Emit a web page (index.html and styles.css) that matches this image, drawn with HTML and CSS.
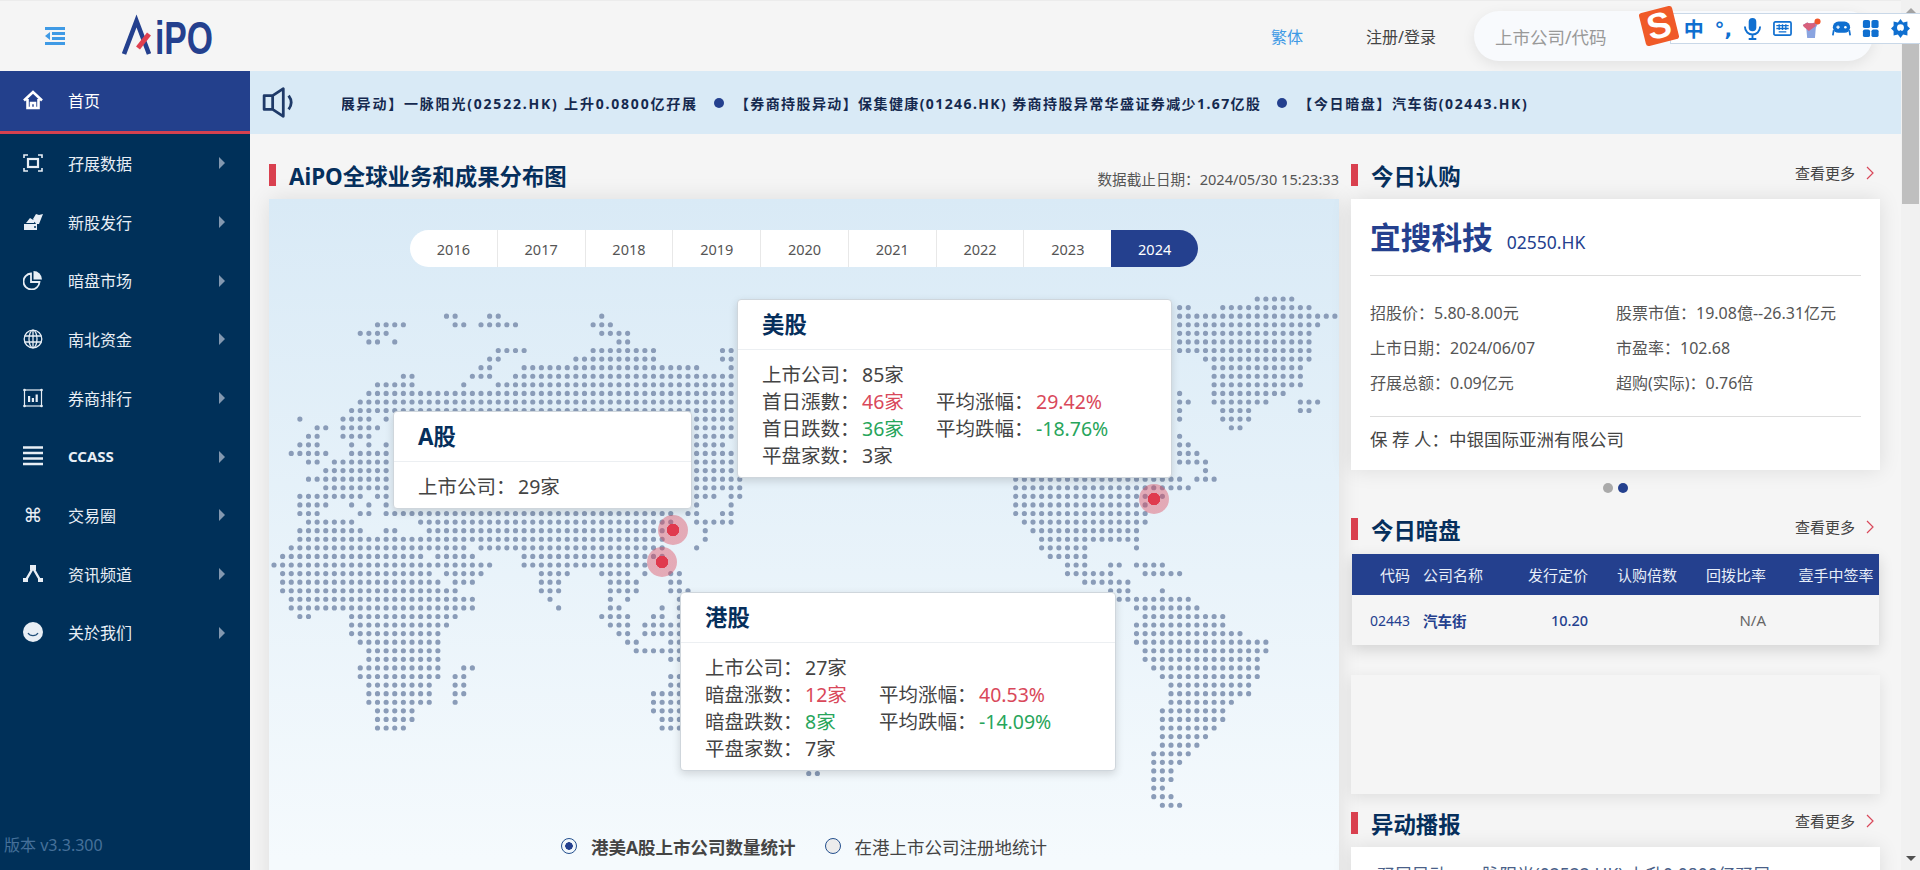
FILE: index.html
```html
<!DOCTYPE html>
<html lang="zh-CN">
<head>
<meta charset="utf-8">
<title>AiPO</title>
<link rel="stylesheet" href="styles.css">
</head>
<body>
<div class="app">
  <header class="topbar">
    <svg class="toggle" viewBox="0 0 20 18"><path d="M0 1.500h20M7 6.500h13M7 11.500h13M0 16.500h20" stroke="#3f9ae5" stroke-width="3" fill="none"/><path d="M5 5v8L0 9z" fill="#3f9ae5"/></svg>
    <svg class="logo" viewBox="0 0 91 35"><path d="M2 35 14.500 2 27 35" fill="none" stroke="#24408e" stroke-width="4.600"/><path d="M16 29 27 15" stroke="#e0404f" stroke-width="5"/><text x="33" y="35" textLength="58" lengthAdjust="spacingAndGlyphs" class="logo-text">iPO</text></svg>
    <a class="lang">繁体</a>
    <a class="login">注册/登录</a>
    <div class="search">上市公司/代码</div>
  </header>
  <div class="layout">
    <nav class="sidebar">
      <a class="nav-item active">
        <svg class="nav-icon" viewBox="0 0 20 20"><path d="M1 10.500 10 2l9 8.500M4.500 9v9h11V9M8 18v-5h4v5" fill="none" stroke="#fff" stroke-width="2.600"/></svg>
        <span>首页</span>
      </a>
      <a class="nav-item">
        <svg class="nav-icon" viewBox="0 0 20 20"><path d="M1 5V2h4M15 2h4v3M19 15v3h-4M5 18H1v-3" fill="none" stroke="#e8eef5" stroke-width="1.600"/><rect x="5" y="6" width="10" height="8" fill="none" stroke="#e8eef5" stroke-width="2.200"/></svg>
        <span>孖展数据</span><i class="caret"></i>
      </a>
      <a class="nav-item">
        <svg class="nav-icon" viewBox="0 0 20 20"><path d="M1 12h13v6H1zM3 11l4-5 5 3-1 2zM10 7l3-5 3 1 4-1-4 10h-3z" fill="#e8eef5"/><circle cx="12" cy="15" r="1" fill="#003059"/></svg>
        <span>新股发行</span><i class="caret"></i>
      </a>
      <a class="nav-item">
        <svg class="nav-icon" viewBox="0 0 20 20"><path d="M8 3.500a8 8 0 1 0 8.500 8.500H8z" fill="none" stroke="#e8eef5" stroke-width="1.800"/><path d="M10.500 1a8.500 8.500 0 0 1 8.500 8.500h-8.500z" fill="#e8eef5"/></svg>
        <span>暗盘市场</span><i class="caret"></i>
      </a>
      <a class="nav-item">
        <svg class="nav-icon" viewBox="0 0 20 20"><g fill="none" stroke="#e8eef5" stroke-width="1.300"><circle cx="10" cy="10" r="8.800"/><ellipse cx="10" cy="10" rx="4" ry="8.800"/><path d="M10 1v18M1.500 7h17M1.500 13h17"/></g></svg>
        <span>南北资金</span><i class="caret"></i>
      </a>
      <a class="nav-item">
        <svg class="nav-icon" viewBox="0 0 20 20"><rect x="1.500" y="2" width="17" height="16" fill="none" stroke="#e8eef5" stroke-width="1.200"/><g fill="#e8eef5"><circle cx="1.500" cy="2" r="1.300"/><circle cx="18.500" cy="2" r="1.300"/><circle cx="1.500" cy="18" r="1.300"/><circle cx="18.500" cy="18" r="1.300"/><path d="M5 8h2.200v6H5zM8.800 10H11v4H8.800zM12.600 6.500h2.200V14h-2.200z"/></g></svg>
        <span>券商排行</span><i class="caret"></i>
      </a>
      <a class="nav-item">
        <svg class="nav-icon" viewBox="0 0 20 20"><path d="M0 1.500h20M0 7h20M0 12.500h20M0 18h20" stroke="#e8eef5" stroke-width="2.600"/></svg>
        <span class="latin">CCASS</span><i class="caret"></i>
      </a>
      <a class="nav-item">
        <span class="cmd">⌘</span>
        <span>交易圈</span><i class="caret"></i>
      </a>
      <a class="nav-item">
        <svg class="nav-icon" viewBox="0 0 20 20"><path d="M3 16 10 4l7 12" fill="none" stroke="#e8eef5" stroke-width="2.400"/><path d="M7 1h6v5H7zM0 14h5v4H0zM15 14h5v4h-5z" fill="#e8eef5"/></svg>
        <span>资讯频道</span><i class="caret"></i>
      </a>
      <a class="nav-item">
        <svg class="nav-icon" viewBox="0 0 20 20"><circle cx="10" cy="10" r="10" fill="#e8eef5"/><path d="M5 11c2 3.500 8 3.500 10 0" fill="none" stroke="#23507a" stroke-width="1.300"/></svg>
        <span>关於我们</span><i class="caret"></i>
      </a>
      <div class="version">版本 v3.3.300</div>
    </nav>
    <main class="content">
      <div class="ticker">
        <svg class="speaker" viewBox="0 0 31 29"><path d="M2 8h8l10-6.500v26L10 21H2zM10 8v13" fill="none" stroke="#1f3a68" stroke-width="2.600" stroke-linejoin="round"/><path d="M25 8c3 4 3 9 0 13" fill="none" stroke="#1f3a68" stroke-width="2.600"/></svg>
        <div class="ticker-window">
          <div class="ticker-track">
            <span class="tick-first">孖展异动】一脉阳光(02522.HK) 上升0.0800亿孖展</span>
            <i class="ticker-dot"></i>
            <span>【券商持股异动】保集健康(01246.HK) 券商持股异常华盛证券减少1.67亿股</span>
            <i class="ticker-dot"></i>
            <span class="tick-last">【今日暗盘】汽车街(02443.HK)</span>
          </div>
        </div>
      </div>
      <div class="columns">
        <section class="col-left">
          <div class="sec-head">
            <h2 class="sec-title">AiPO全球业务和成果分布图</h2>
            <span class="asof">数据截止日期：2024/05/30 15:23:33</span>
          </div>
          <div class="map-card">
            <div class="years">
              <span>2016</span><span>2017</span><span>2018</span><span>2019</span><span>2020</span><span>2021</span><span>2022</span><span>2023</span><span class="on">2024</span>
            </div>
            <div class="stage">
              <svg class="dots" viewBox="0 -2 124 60" preserveAspectRatio="none"><path d="M114-2H118.010
M105-1H106.010M110-1H120.010
M20 0H21.010M25 0H26.010M38 0h.01M105 0H123.010
M12 1H15.010M21 1H22.010M24 1H28.010M37 1H39.010M105 1H121.010
M10 2H13.010M38 2H41.010M105 2H120.010
M11 3H12.010M14 3h.01M40 3H41.010M105 3H120.010
M26 4H29.010M37 4H44.010M52 4H53.010M105 4H120.010
M25 5H26.010M35 5H44.010M52 5H53.010M108 5H120.010
M24 6H25.010M29 6H49.010M53 6h.01M109 6H119.010
M15 7H16.010M23 7H25.010M28 7H53.010M109 7H119.010
M12 8H16.010M22 8h.01M26 8H53.010M109 8H119.010
M11 9H53.010M105 9h.01M109 9H117.010
M10 10H53.010M105 10H106.010M109 10H115.010M119 10H121.010
M9 11H53.010M105 11h.01M110 11H113.010M119 11H120.010
M3 12h.01M8 12H11.010M13 12h.01M49 12H53.010M105 12h.01M110 12H113.010
M5 13H6.010M8 13H12.010M49 13H53.010M111 13H112.010
M4 14H5.010M8 14H11.010M49 14H53.010M105 14h.01
M3 15H5.010M9 15h.01M11 15h.01M13 15h.01M49 15H52.010M105 15H106.010
M2 16H6.010M9 16H13.010M49 16H53.010M105 16H107.010
M4 17H5.010M7 17H13.010M49 17H53.010M105 17H108.010
M6 18H13.010M49 18H53.010M108 18h.01
M4 19H13.010M49 19H54.010M86 19H105.010M107 19H109.010
M6 20H13.010M49 20H54.010M86 20H106.010
M3 21H10.010M12 21H13.010M49 21H51.010M53 21H54.010M86 21H103.010
M3 22H6.010M9 22h.01M11 22h.01M13 22h.01M49 22h.01M53 22h.01M86 22H101.010
M3 23H5.010M10 23H11.010M13 23H46.010M48 23H49.010M52 23H53.010M86 23H101.010
M4 24H9.010M17 24H46.010M49 24H53.010M87 24H101.010
M3 25H10.010M13 25H14.010M18 25H45.010M50 25h.01M88 25H100.010
M3 26H45.010M50 26h.01M89 26H100.010
M2 27H22.010M24 27H45.010M49 27h.01M89 27H94.010M100 27h.01
M1 28H17.010M19 28H23.010M29 28H45.010M90 28H94.010
M0 29H25.010M29 29H43.010M45 29h.01M92 29H94.010M97 29H98.010M100 29H103.010
M1 30H18.010M20 30H24.010M31 30H34.010M38 30H41.010M43 30h.01M46 30H47.010M92 30H97.010M101 30H105.010
M1 31H19.010M21 31H23.010M31 31H33.010M39 31H42.010M46 31H47.010M94 31H99.010
M1 32H21.010M31 32H33.010M39 32H42.010M46 32H48.010M97 32H99.010M103 32h.01
M2 33H23.010M32 33h.01M39 33h.01M41 33h.01M47 33h.01M98 33H106.010
M2 34H23.010M33 34h.01M39 34H40.010M45 34h.01M47 34h.01M100 34H107.010
M3 35H4.010M9 35H21.010M38 35H41.010M44 35H45.010M47 35h.01M101 35H110.010
M9 36H20.010M39 36H41.010M43 36H47.010M100 36H110.010
M9 37H19.010M40 37H41.010M43 37H47.010M100 37H112.010
M10 38H19.010M41 38H42.010M46 38H47.010M100 38H115.010
M11 39H19.010M42 39H47.010M101 39H115.010
M11 40H19.010M46 40H47.010M101 40H114.010
M10 41H19.010M22 41H23.010M102 41H114.010
M10 42H19.010M21 42H22.010M46 42H47.010M103 42H114.010
M11 43H18.010M21 43H22.010M46 43H47.010M104 43H113.010
M11 44H18.010M21 44H22.010M44 44H47.010M104 44H113.010
M11 45H18.010M21 45h.01M44 45H47.010M104 45H111.010
M12 46H16.010M44 46H47.010M103 46H110.010
M12 47H16.010M45 47H47.010M103 47H110.010
M12 48H15.010M45 48H47.010M103 48H109.010
M103 49H108.010
M103 50H107.010
M102 51H106.010
M102 52H105.010
M62 53.300H63.010M102 53H104.010
M102 54H104.010
M102 55H103.010
M102 56H104.010
M103 57H105.010"/></svg>
              <i class="pulse pulse-a"></i>
              <i class="pulse pulse-b"></i>
              <i class="pulse pulse-c"></i>
              <div class="tip tip-a">
                <h3>A股</h3>
                <div class="tip-body"><span>上市公司：</span><span>29家</span></div>
              </div>
              <div class="tip tip-us">
                <h3>美股</h3>
                <div class="tip-body">
                  <span>上市公司：</span><span>85家</span><span></span><span></span>
                  <span>首日漲數：</span><span class="up">46家</span><span>平均涨幅：</span><span class="up">29.42%</span>
                  <span>首日跌数：</span><span class="down">36家</span><span>平均跌幅：</span><span class="down">-18.76%</span>
                  <span>平盘家数：</span><span>3家</span>
                </div>
              </div>
              <div class="tip tip-hk">
                <h3>港股</h3>
                <div class="tip-body">
                  <span>上市公司：</span><span>27家</span><span></span><span></span>
                  <span>暗盘涨数：</span><span class="up">12家</span><span>平均涨幅：</span><span class="up">40.53%</span>
                  <span>暗盘跌数：</span><span class="down">8家</span><span>平均跌幅：</span><span class="down">-14.09%</span>
                  <span>平盘家数：</span><span>7家</span>
                </div>
              </div>
            </div>
            <div class="radios">
              <label class="radio checked"><i></i>港美A股上市公司数量统计</label>
              <label class="radio"><i></i>在港上市公司注册地统计</label>
            </div>
          </div>
        </section>
        <aside class="col-right">
          <div class="sec-head">
            <h2 class="sec-title">今日认购</h2>
            <a class="more">查看更多<svg viewBox="0 0 8 14"><path d="M1 1l6 6-6 6" fill="none" stroke="#d9485a" stroke-width="1.200"/></svg></a>
          </div>
          <div class="ipo-card">
            <div class="ipo-head"><strong>宜搜科技</strong><span>02550.HK</span></div>
            <div class="ipo-grid">
              <span>招股价：5.80-8.00元</span><span>股票市值：19.08億--26.31亿元</span>
              <span>上市日期：2024/06/07</span><span>市盈率：102.68</span>
              <span>孖展总额：0.09亿元</span><span>超购(实际)：0.76倍</span>
            </div>
            <div class="ipo-sponsor">保 荐 人：中银国际亚洲有限公司</div>
          </div>
          <div class="pager"><i></i><i class="on"></i></div>
          <div class="sec-head sec-gap">
            <h2 class="sec-title">今日暗盘</h2>
            <a class="more">查看更多<svg viewBox="0 0 8 14"><path d="M1 1l6 6-6 6" fill="none" stroke="#d9485a" stroke-width="1.200"/></svg></a>
          </div>
          <table class="grey-table">
            <thead><tr><th>代码</th><th>公司名称</th><th>发行定价</th><th>认购倍数</th><th>回拨比率</th><th>壹手中签率</th></tr></thead>
            <tbody><tr><td class="code">02443</td><td class="name">汽车街</td><td class="price">10.20</td><td></td><td class="na">N/A</td><td></td></tr></tbody>
          </table>
          <div class="blank-panel"></div>
          <div class="sec-head sec-gap2">
            <h2 class="sec-title">异动播报</h2>
            <a class="more">查看更多<svg viewBox="0 0 8 14"><path d="M1 1l6 6-6 6" fill="none" stroke="#d9485a" stroke-width="1.200"/></svg></a>
          </div>
          <div class="news-card"><p>孖展异动　一脉阳光(02522.HK) 上升0.0800亿孖展</p></div>
        </aside>
      </div>
    </main>
  </div>
</div>
<div class="scrollbar">
  <i class="sb-up"></i>
  <div class="sb-thumb"></div>
  <i class="sb-down"></i>
</div>
<div class="ime">
  <span class="ime-logo">S</span>
  <span class="ime-cell ime-zh">中</span>
  <span class="ime-cell ime-punct">°,</span>
  <span class="ime-cell"><svg viewBox="0 0 20 24"><rect x="6" y="1" width="8" height="14" rx="4" fill="#0f6fd0"/><path d="M2 10c0 11 16 11 16 0M10 18v4M6 23h8" fill="none" stroke="#0f6fd0" stroke-width="2"/></svg></span>
  <span class="ime-cell"><svg viewBox="0 0 20 20"><rect x="1" y="3" width="18" height="14" rx="1.500" fill="none" stroke="#0f6fd0" stroke-width="1.800"/><path d="M3.500 7h13M3.500 10h13M6 13.500h8M6.500 5.500v6M10 5.500v6M13.500 5.500v6" stroke="#0f6fd0" stroke-width="1.400" fill="none"/></svg></span>
  <span class="ime-cell"><svg viewBox="0 0 22 24"><path d="M1 8l5-3 2 1h4l3-1 3 2-2 4-1 12H6L5 12z" fill="#8aa4e0"/><path d="M1 8l5-3 2 1h4l3-1 1 4-8 6-6-5z" fill="#d8607c"/><circle cx="18" cy="4" r="3.500" fill="#f0562a"/></svg></span>
  <span class="ime-cell"><svg viewBox="0 0 22 20"><rect x="1" y="2" width="20" height="13" rx="6.500" fill="#0f6fd0"/><path d="M2 12 1 18M20 12l1 6" stroke="#0f6fd0" stroke-width="2"/><path d="M5 8.500h4M7 6.500v4" stroke="#fff" stroke-width="1.400"/><circle cx="15.500" cy="8.500" r="1.500" fill="#fff"/></svg></span>
  <span class="ime-cell"><svg viewBox="0 0 20 20"><g fill="#0f6fd0"><rect x="2" y="1" width="7.500" height="8.500" rx="2"/><rect x="11" y="1" width="7.500" height="8.500" rx="2"/><rect x="2" y="11" width="7.500" height="8" rx="2"/><rect x="11" y="11" width="7.500" height="8" rx="2"/></g></svg></span>
  <span class="ime-cell"><svg viewBox="0 0 22 24"><path d="M11 1l3 4 5-1v5l3 3-3 3v5l-5-1-3 4-3-4-5 1v-5l-3-3 3-3V4l5 1z" fill="#0f6fd0"/><circle cx="11" cy="11" r="4" fill="#fff"/><path d="M11 14v5" stroke="#0f6fd0" stroke-width="2"/></svg></span>
</div>
</body>
</html>
```
FILE: styles.css
```css
* { box-sizing: border-box; }
html, body { margin: 0; height: 870px; overflow: hidden; }
body {
  display: flex;
  position: relative;
  font-family: "Noto Sans", "Noto Sans CJK SC", sans-serif;
  background: #f5f5f5;
  color: #444;
}
h2, h3, p { margin: 0; }
i { display: block; font-style: normal; }

.app { width: 1901px; height: 870px; display: flex; flex-direction: column; }

/* top bar */
.topbar {
  height: 71px;
  flex: none;
  display: flex;
  align-items: center;
  padding: 0 28px 0 45px;
  border-top: 1px solid #ececec;
  background: #f5f5f5;
}
.toggle { width: 20px; height: 18px; }
.logo { width: 91px; height: 35px; margin-left: 57px; overflow: visible; }
.logo-text { font-family: "Liberation Sans", sans-serif; font-size: 47px; font-weight: 700; fill: #24408e; }
.lang { margin-left: auto; font-size: 16px; color: #3f9ae5; }
.login { margin-left: 63px; font-size: 16px; color: #444; }
.search {
  margin-left: 38px;
  width: 399px;
  height: 50px;
  display: flex;
  align-items: center;
  padding-left: 21px;
  border-radius: 25px;
  background: #f8fafd;
  box-shadow: 0 4px 14px rgba(0, 0, 0, .08);
  font-size: 17.5px;
  color: #999;
}

/* sidebar */
.layout { flex: 1; display: flex; min-height: 0; }
.sidebar {
  width: 250px;
  flex: none;
  display: flex;
  flex-direction: column;
  background: #003059;
  color: #e8eef5;
  font-size: 16px;
}
.nav-item {
  height: 58.7px;
  flex: none;
  display: flex;
  align-items: center;
  padding: 0 0 1px 23px;
  position: relative;
}
.nav-item.active {
  height: 63px;
  padding-bottom: 3px;
  background: #23408c;
  border-bottom: 3px solid #d5414f;
  color: #fff;
}
.nav-icon { width: 20px; height: 20px; flex: none; margin-right: 25px; }
.cmd {
  width: 20px;
  margin-right: 25px;
  font-family: "DejaVu Sans", sans-serif;
  font-size: 19px;
  text-align: center;
}
.latin { font-weight: 700; font-size: 15px; }
.caret {
  position: absolute;
  right: 25px;
  top: 50%;
  margin-top: -6px;
  border-left: 6px solid #8398b0;
  border-top: 6px solid transparent;
  border-bottom: 6px solid transparent;
}
.version {
  margin-top: auto;
  padding: 0 0 14px 4px;
  font-size: 16px;
  color: #46709a;
}

/* content */
.content { flex: 1; min-width: 0; overflow: hidden; }
.ticker {
  height: 63px;
  display: flex;
  align-items: center;
  background: #d9eaf6;
  padding-left: 12px;
}
.speaker { width: 33px; height: 31px; flex: none; }
.ticker-window { margin-left: 47px; flex: 1; overflow: hidden; }
.ticker-track {
  display: flex;
  align-items: center;
  margin-left: -17px;
  white-space: nowrap;
  font-size: 14px;
  font-weight: 700;
  letter-spacing: 1.4px;
  color: #15294f;
}
.tick-first { letter-spacing: 1.8px; }
.tick-last { letter-spacing: 1.6px; }
.ticker-dot {
  width: 10px;
  height: 10px;
  margin: 0 11px 0 16px;
  border-radius: 50%;
  background: #24408e;
}

.columns { display: flex; gap: 12px; padding-left: 19px; }
.col-left { width: 1070px; flex: none; }
.col-right { width: 529px; flex: none; }

.sec-head {
  height: 22px;
  margin-top: 30px;
  display: flex;
  align-items: flex-start;
  justify-content: space-between;
}
.sec-gap { margin-top: 25px; }
.sec-gap2 { margin-top: 18px; }
.sec-title {
  display: flex;
  gap: 13px;
  height: 22px;
  line-height: 25px;
  font-size: 22.4px;
  font-weight: 700;
  color: #062f5c;
  white-space: nowrap;
}
.sec-title::before {
  content: "";
  width: 7px;
  height: 22px;
  flex: none;
  background: #d9404f;
}
.asof { font-size: 14.6px; line-height: 30px; color: #555; }
.more {
  display: flex;
  align-items: center;
  gap: 11px;
  height: 17px;
  font-size: 15px;
  color: #444;
  padding-right: 6px;
}
.more svg { width: 8px; height: 14px; }

/* map */
.map-card {
  margin-top: 13px;
  height: 720px;
  padding-top: 31px;
  background: linear-gradient(#d9eaf6, #f5fafd 660px);
  box-shadow: 0 0 22px rgba(0, 0, 0, .1);
}
.years {
  width: 788px;
  height: 37px;
  margin: 0 auto;
  display: flex;
  border-radius: 19px;
  overflow: hidden;
  background: #fff;
  font-size: 14.5px;
  color: #555;
}
.years span {
  flex: 1;
  display: flex;
  align-items: center;
  justify-content: center;
  border-left: 1px solid #e8e8e8;
}
.years span:first-child { border-left: 0; }
.years .on { background: #24408e; color: #fff; border-left: 0; }

.stage { position: relative; height: 567px; }
.dots {
  position: absolute;
  left: 5.3px;
  top: 31.84px;
  width: 1069.5px;
  height: 514.8px;
  overflow: visible;
}
.dots path {
  fill: none;
  stroke: #8a9cb8;
  stroke-width: .6;
  stroke-linecap: round;
  stroke-dasharray: 0 1;
}
.pulse {
  position: absolute;
  width: 30px;
  height: 30px;
  margin: -15px 0 0 -15px;
  border-radius: 50%;
  background: radial-gradient(circle, #e03a4e 0 6px, rgba(222, 70, 90, .42) 6.5px);
}
.pulse-a { left: 403.5px; top: 263px; }
.pulse-b { left: 393px; top: 294.7px; }
.pulse-c { left: 885px; top: 232px; }

.tip {
  position: absolute;
  background: #fff;
  border-radius: 4px;
  border: 1px solid #cfd6dc;
  box-shadow: 0 3px 8px rgba(0, 0, 0, .14);
  font-size: 19.5px;
  line-height: 27px;
  color: #444;
}
.tip h3 {
  height: 50px;
  padding-left: 24px;
  line-height: 50px;
  border-bottom: 1px solid #eceff2;
  font-size: 22.4px;
  font-weight: 700;
  color: #062f5c;
}
.tip-body {
  display: grid;
  grid-template-columns: 100px 74px 100px auto;
  padding: 11px 24px 8px;
  white-space: nowrap;
}
.tip-a { left: 124px; top: 144px; width: 299px; }
.tip-us { left: 468px; top: 32px; width: 435px; }
.tip-hk { left: 411px; top: 325px; width: 436px; }
.up { color: #d9485a; }
.down { color: #27a55b; }

.radios {
  display: flex;
  justify-content: center;
  gap: 29px;
  height: 24px;
  align-items: center;
  font-size: 17.5px;
  color: #444;
}
.radio { display: flex; align-items: center; gap: 14px; white-space: nowrap; }
.radio i {
  width: 16px;
  height: 16px;
  border-radius: 50%;
  border: 1px solid #24508e;
  background: #ececec;
}
.radio.checked { font-weight: 700; }
.radio.checked i { background: radial-gradient(circle, #24408e 0 3.500px, #f2f8fc 4px); }

/* right column */
.ipo-card {
  margin-top: 13px;
  height: 271px;
  padding: 18px 19px 0;
  background: #fff;
  box-shadow: 0 0 20px rgba(0, 0, 0, .1);
}
.ipo-head {
  height: 59px;
  display: flex;
  align-items: baseline;
  gap: 14px;
  line-height: 40px;
  border-bottom: 1px solid #ddd;
  color: #24408e;
}
.ipo-head strong { font-size: 30.7px; }
.ipo-head span { font-size: 17.5px; }
.ipo-grid {
  display: grid;
  grid-template-columns: 246px 1fr;
  grid-auto-rows: 35px;
  align-items: center;
  padding: 18px 0;
  height: 141px;
  border-bottom: 1px solid #ddd;
  font-size: 16px;
  color: #555;
  white-space: nowrap;
}
.ipo-sponsor { line-height: 28px; margin-top: 8px; font-size: 17.5px; color: #444; }

.pager { display: flex; justify-content: center; gap: 5px; margin-top: 13px; }
.pager i { width: 10px; height: 10px; border-radius: 50%; background: #aaa; }
.pager .on { background: #24408e; }

.grey-table {
  width: 527px;
  margin: 14px 0 0 1px;
  border-collapse: collapse;
  table-layout: fixed;
  background: #f5f5f5;
  box-shadow: 0 5px 14px rgba(0, 0, 0, .14);
  font-size: 15px;
  text-align: right;
}
.grey-table th {
  height: 41px;
  padding: 0;
  background: #24408e;
  color: #e8eef8;
  font-weight: 400;
  white-space: nowrap;
}
.grey-table td { height: 50px; padding: 0; }
.grey-table th:nth-child(1) { width: 58px; }
.grey-table th:nth-child(2) { width: 90px; padding-left: 13px; text-align: left; }
.grey-table th:nth-child(3) { width: 88px; }
.grey-table th:nth-child(4) { width: 89px; }
.grey-table th:nth-child(5) { width: 89px; }
.grey-table th:nth-child(6) { width: 113px; padding-right: 5.500px; }
.code { color: #24408e; font-size: 14px; }
.grey-table .name { padding-left: 13px; text-align: left; font-weight: 700; color: #24408e; font-size: 14.5px; }
.price { color: #24408e; font-weight: 500; font-size: 14.5px; }
.na { color: #666; }

.blank-panel {
  margin-top: 30px;
  height: 119px;
  background: #f5f5f5;
  box-shadow: 0 4px 14px rgba(0, 0, 0, .09);
}
.news-card {
  margin-top: 13px;
  height: 60px;
  padding: 13px 0 0 26px;
  background: #fff;
  box-shadow: 0 0 20px rgba(0, 0, 0, .1);
  font-size: 17.5px;
  line-height: 28px;
  color: #4a5f88;
  white-space: nowrap;
}
.news-card p { position: relative; }
.news-card p::before {
  content: "";
  position: absolute;
  left: -11px;
  top: 12px;
  width: 4px;
  height: 4px;
  border-radius: 50%;
  background: #8a9cb8;
}

/* browser scrollbar */
.scrollbar {
  width: 19px;
  flex: none;
  height: 870px;
  display: flex;
  flex-direction: column;
  align-items: stretch;
  background: #f1f1f1;
}
.sb-up {
  margin: 8px auto 3px;
  border-left: 5px solid transparent;
  border-right: 5px solid transparent;
  border-bottom: 5px solid #a3a3a3;
}
.sb-thumb { height: 188px; margin: 0 1px; background: #bfbfbf; }
.sb-down {
  margin: auto auto 9px;
  border-left: 5px solid transparent;
  border-right: 5px solid transparent;
  border-top: 5px solid #505050;
}

/* input method toolbar */
.ime {
  position: absolute;
  left: 1670px;
  top: 13px;
  width: 250px;
  height: 31px;
  display: flex;
  align-items: center;
  padding-left: 8px;
  background: #fff;
  border: 1px solid #c9d8e8;
  border-right: 0;
}
.ime-logo {
  position: absolute;
  left: -29px;
  top: -5px;
  width: 34px;
  height: 34px;
  display: flex;
  align-items: center;
  justify-content: center;
  border-radius: 3px;
  background: #f05a28;
  color: #fff;
  font-family: "Liberation Sans", sans-serif;
  font-weight: 700;
  font-size: 36px;
  transform: rotate(-14deg);
}
.ime-cell {
  width: 29.5px;
  height: 24px;
  flex: none;
  display: flex;
  align-items: center;
  justify-content: center;
}
.ime-cell svg { width: 19px; height: 23px; }
.ime-zh { font-size: 20px; font-weight: 700; color: #0f6fd0; }
.ime-punct { font-size: 20px; font-weight: 700; color: #0f6fd0; font-family: "DejaVu Sans", sans-serif; }
```
